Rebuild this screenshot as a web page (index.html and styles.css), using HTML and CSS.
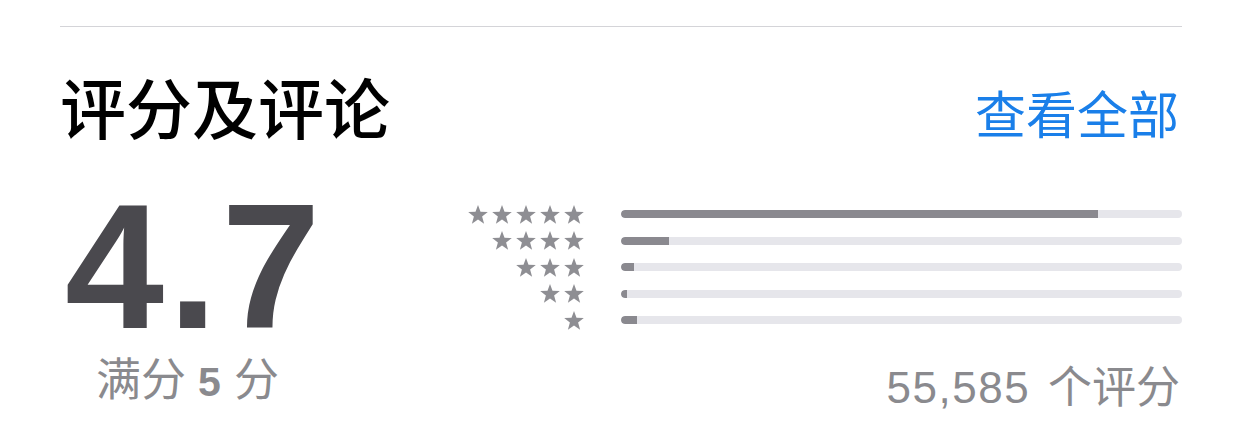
FILE: index.html
```html
<!DOCTYPE html>
<html lang="zh">
<head>
<meta charset="utf-8">
<link rel="stylesheet" href="styles.css">
</head>
<body>
<svg width="0" height="0" class="defs">
  <defs>
    <path id="star" d="M10 0.1 L12.5 6.8 L19.8 7.05 L14.1 11.55 L16.1 18.8 L10 14.6 L3.9 18.8 L5.9 11.55 L0.2 7.05 L7.5 6.8 Z"/>
  </defs>
</svg>
<section class="ratings">
  <div class="divider"></div>
  <header class="head">
    <h2 class="title">评分及评论</h2>
    <a class="see-all">查看全部</a>
  </header>
  <div class="summary">
    <div class="score">
      <div class="big">4.7</div>
      <div class="outof">满分 <b>5</b> 分</div>
    </div>
    <div class="histogram">
      <div class="row">
        <div class="stars"><svg viewBox="0 0 20 19"><use href="#star"/></svg><svg viewBox="0 0 20 19"><use href="#star"/></svg><svg viewBox="0 0 20 19"><use href="#star"/></svg><svg viewBox="0 0 20 19"><use href="#star"/></svg><svg viewBox="0 0 20 19"><use href="#star"/></svg></div>
        <div class="bar"><div class="fill" style="width:85%"></div></div>
      </div>
      <div class="row">
        <div class="stars"><svg viewBox="0 0 20 19"><use href="#star"/></svg><svg viewBox="0 0 20 19"><use href="#star"/></svg><svg viewBox="0 0 20 19"><use href="#star"/></svg><svg viewBox="0 0 20 19"><use href="#star"/></svg></div>
        <div class="bar"><div class="fill" style="width:8.6%"></div></div>
      </div>
      <div class="row">
        <div class="stars"><svg viewBox="0 0 20 19"><use href="#star"/></svg><svg viewBox="0 0 20 19"><use href="#star"/></svg><svg viewBox="0 0 20 19"><use href="#star"/></svg></div>
        <div class="bar"><div class="fill" style="width:2.3%"></div></div>
      </div>
      <div class="row">
        <div class="stars"><svg viewBox="0 0 20 19"><use href="#star"/></svg><svg viewBox="0 0 20 19"><use href="#star"/></svg></div>
        <div class="bar"><div class="fill" style="width:1.1%"></div></div>
      </div>
      <div class="row">
        <div class="stars"><svg viewBox="0 0 20 19"><use href="#star"/></svg></div>
        <div class="bar"><div class="fill" style="width:2.8%"></div></div>
      </div>
      <div class="count"><span class="num">55,585</span> 个评分</div>
    </div>
  </div>
</section>
</body>
</html>
```

FILE: styles.css
```css
html, body {
  margin: 0;
  padding: 0;
  background: #ffffff;
}
.defs {
  position: absolute;
  width: 0;
  height: 0;
}
.ratings {
  padding: 26px 57px 0 60px;
  font-family: "Liberation Sans", "Noto Sans CJK SC", sans-serif;
}
.divider {
  height: 1px;
  background: #d4d4d8;
}
.head {
  display: flex;
  justify-content: space-between;
  align-items: baseline;
  margin-top: 38px;
}
.title {
  margin: 0;
  font-family: "Noto Sans CJK SC", sans-serif;
  font-weight: 500;
  font-size: 66px;
  line-height: 80px;
  color: #000;
}
.see-all {
  font-family: "Noto Sans CJK SC", sans-serif;
  font-size: 51px;
  line-height: 60px;
  color: #1a7fe9;
  margin-right: 3px;
}
.summary {
  display: flex;
  margin-top: 42px;
}
.score {
  width: 400px;
  flex: none;
}
.big {
  font-family: "Liberation Sans", sans-serif;
  font-weight: 700;
  font-size: 178px;
  line-height: 160px;
  color: #4a494e;
  letter-spacing: 4px;
  margin-left: 5px;
}
.outof {
  font-family: "Noto Sans CJK SC", sans-serif;
  font-size: 45px;
  line-height: 48px;
  color: #8a8a8e;
  margin-left: 36px;
  margin-top: 6px;
  word-spacing: 2px;
}
.outof b {
  font-family: "Liberation Sans", sans-serif;
  font-weight: 700;
  font-size: 41px;
  letter-spacing: 1px;
}
.histogram {
  flex: 1;
  padding-top: 14px;
}
.row {
  display: flex;
  align-items: center;
  height: 26.5px;
}
.stars {
  width: 124px;
  flex: none;
  display: flex;
  justify-content: flex-end;
  gap: 4px;
}
.stars svg {
  width: 20px;
  height: 19px;
  fill: #8e8e93;
  display: block;
}
.bar {
  flex: 1;
  margin-left: 37px;
  height: 8px;
  border-radius: 4px;
  background: #e6e6eb;
  overflow: hidden;
}
.fill {
  height: 100%;
  background: #8a898f;
  border-radius: 4px 0 0 4px;
}
.count {
  text-align: right;
  font-family: "Noto Sans CJK SC", sans-serif;
  font-size: 44px;
  line-height: 48px;
  color: #8a8a8e;
  margin-top: 26px;
  margin-right: 2px;
}
.count .num {
  font-family: "Liberation Sans", sans-serif;
  letter-spacing: 1.5px;
  margin-right: 8px;
}
```
